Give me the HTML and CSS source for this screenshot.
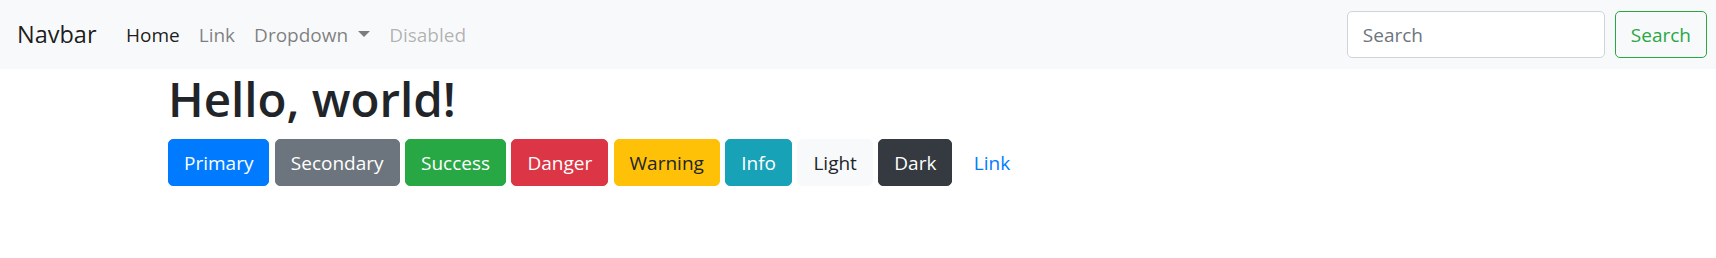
FILE: index.html
```html
<!DOCTYPE html>
<html lang="en">
<head>
    <meta charset="UTF-8">
    <meta name="viewport" content="width=device-width, initial-scale=1.0">
    <title>Hello, world!</title>
    <link rel="stylesheet" href="styles.css">
</head>
<body>
    <!-- Navbar -->
    <nav class="navbar">
        <a class="navbar-brand" href="#">Navbar</a>
        <ul class="nav">
            <li><a class="nav-link active" href="#">Home</a></li>
            <li><a class="nav-link" href="#">Link</a></li>
            <li><a class="nav-link dropdown-toggle" href="#">Dropdown</a></li>
            <li><a class="nav-link disabled" href="#">Disabled</a></li>
        </ul>
        <form class="search-form">
            <input class="search-input" type="search" placeholder="Search">
            <button class="btn btn-outline-success" type="submit">Search</button>
        </form>
    </nav>

    <!-- Main Container -->
    <div class="container">
        <h1>Hello, world!</h1>
        <div class="btn-row">
            <button class="btn btn-primary">Primary</button>
            <button class="btn btn-secondary">Secondary</button>
            <button class="btn btn-success">Success</button>
            <button class="btn btn-danger">Danger</button>
            <button class="btn btn-warning">Warning</button>
            <button class="btn btn-info">Info</button>
            <button class="btn btn-light">Light</button>
            <button class="btn btn-dark">Dark</button>
            <button class="btn btn-link">Link</button>
        </div>
    </div>
</body>
</html>
```

FILE: styles.css
```css
/* ===== BASE RESET ===== */
* {
    margin: 0;
    padding: 0;
    box-sizing: border-box;
}

body {
    font-family: 'Open Sans', 'Noto Sans', Arial, sans-serif;
    font-size: 19px;
    line-height: 30px;
    color: #212529;
    background: #fff;
}

a {
    text-decoration: none;
}

/* ===== NAVBAR ===== */
.navbar {
    display: flex;
    align-items: center;
    height: 69px;
    padding: 0 9px 0 17px;
    background: #f8f9fa;
}

.navbar-brand {
    font-size: 23.5px;
    line-height: 37px;
    color: rgba(0, 0, 0, 0.9);
    margin-right: 20px;
    padding: 6px 0;
}

.nav {
    display: flex;
    list-style: none;
}

.nav-link {
    display: block;
    padding: 10px 9.5px;
    color: rgba(0, 0, 0, 0.5);
}

.nav-link.active {
    color: rgba(0, 0, 0, 0.9);
}

.nav-link.disabled {
    color: rgba(0, 0, 0, 0.3);
}

.dropdown-toggle::after {
    content: "";
    display: inline-block;
    margin-left: 10px;
    vertical-align: 5px;
    border-top: 6px solid;
    border-right: 6px solid transparent;
    border-left: 6px solid transparent;
}

.search-form {
    display: flex;
    margin-left: auto;
}

.search-input {
    width: 258px;
    height: 47px;
    margin-right: 10px;
    padding: 7px 15px;
    font: inherit;
    color: #495057;
    background: #fff;
    border: 1.25px solid #ced4da;
    border-radius: 5px;
    outline: none;
}

.search-input::placeholder {
    color: #6c757d;
}

/* ===== CONTENT ===== */
.container {
    max-width: 1380px;
    margin: 0 auto;
}

h1 {
    font-size: 47.5px;
    font-weight: 600;
    line-height: 60px;
    margin-bottom: 10px;
}

.btn-row {
    display: flex;
    gap: 5.4px;
}

/* ===== BUTTONS ===== */
.btn {
    height: 47px;
    padding: 7px 15px;
    font: inherit;
    color: #fff;
    background: transparent;
    border: 1.25px solid transparent;
    border-radius: 5px;
    cursor: pointer;
}

.btn-primary { background: #007bff; border-color: #007bff; }
.btn-secondary { background: #6c757d; border-color: #6c757d; }
.btn-success { background: #28a745; border-color: #28a745; }
.btn-danger { background: #dc3545; border-color: #dc3545; }
.btn-warning { background: #ffc107; border-color: #ffc107; color: #212529; }
.btn-info { background: #17a2b8; border-color: #17a2b8; }
.btn-light { background: #f8f9fa; border-color: #f8f9fa; color: #212529; }
.btn-dark { background: #343a40; border-color: #343a40; }
.btn-link { color: #007bff; }

.btn-outline-success {
    color: #28a745;
    border-color: #28a745;
}
```
